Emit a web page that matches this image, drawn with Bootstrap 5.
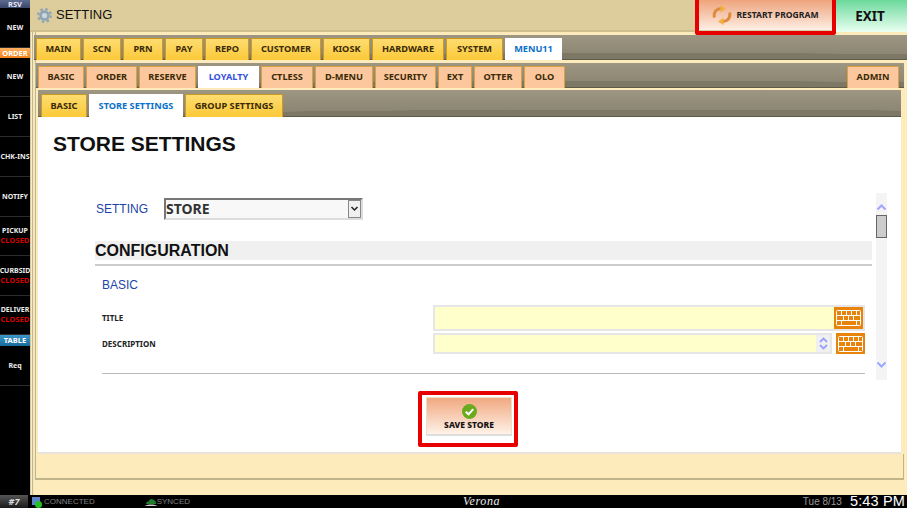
<!DOCTYPE html>
<html lang="en"><head><meta charset="utf-8"><title>Setting</title>
<link href="https://cdn.jsdelivr.net/npm/bootstrap@5.3.0/dist/css/bootstrap.min.css" rel="stylesheet">
<style>
html,body{height:508px;overflow:hidden;background:#000;font-family:"Noto Sans","Liberation Sans",sans-serif}
.app-top{height:495px}
.side{width:30px;background:#000;flex:none;overflow:hidden}
.side-head{font-size:7.5px;font-weight:700;text-align:center;color:#fff}
.sh-rsv{height:8px;background:linear-gradient(#5f6c92,#39456a);color:#e8e8f0;line-height:8px}
.sh-ord{height:10px;background:linear-gradient(#ffb060,#f08018);line-height:10px}
.sh-tab{height:11px;background:linear-gradient(#3c96c8,#1a6a9c);line-height:11px}
.side-item{height:40px;border-bottom:1px solid #2c2c2c;display:flex;flex-direction:column;align-items:center;justify-content:center;font-size:7px;font-weight:700;line-height:10px;color:#eee;white-space:nowrap;overflow:hidden}
.si-short{height:39px}
.closed{color:#e00000;letter-spacing:.4px}
.main-col{min-width:0;background:linear-gradient(90deg,#d8c894 0,#d8c894 1px,#f4ecd0 1px,#f4ecd0 2px,#c8b680 2px,#c8b680 3px,#f2e8c8 3px,#f2e8c8 5px,#c0b488 5px,#c0b488 6px,#fdebbb 6px)}
.topbar{height:32px;background:#ddcd9c;border-bottom:2px solid #cfbf8e;flex:none}
.gear{margin:8px 4px 0 7px}
.page-title{font-size:13px;color:#111;font-family:"Liberation Sans",sans-serif;line-height:30px}
.restart-box{margin-left:auto;width:141px;height:35px;border:4px solid #e60000;border-top:0;border-radius:0 0 3px 3px;position:relative;z-index:2;background:#fff}
.restart-btn{width:100%;height:31px;background:linear-gradient(#eea47c,#fdeee4);border:0;border-bottom:1px solid #d8cfa8;padding:0;font-size:8.6px;font-weight:700;color:#222;line-height:31px;display:flex;align-items:center;justify-content:center;gap:4px}
.exit-btn{width:71px;height:32px;background:linear-gradient(#6bd99b,#eafff2);border:0;padding:0 3px 0 0;font-size:13.5px;font-weight:700;color:#111}
.panel{margin:0 0 0 4px;flex:1;min-height:0;display:flex;flex-direction:column}
.tabbar{background:radial-gradient(ellipse 70% 40% at 70% 115%,#7d7866 0 98%,transparent 100%),linear-gradient(#9c9683,#88826f);border-bottom:1px solid #5e5a4a;display:flex;align-items:flex-end;gap:2px;flex:none}
.bar1{margin-top:3px;padding-left:2px;height:25px}
.bar2{margin:3px 3px 0 2px;padding-left:2px;padding-right:5px;height:25px}
.bar3{margin:2px 6px 0 4px;padding-left:3px;height:27px}
.tabx{height:22px;margin-bottom:-1px;display:flex;align-items:center;justify-content:center;font-size:9.2px;font-weight:700;color:#3a2a08;white-space:nowrap;border:1px solid #cc9a22;border-bottom:0;padding:0 0 1px;text-decoration:none}
.bar3 .tabx{height:23px}
.ty{background:linear-gradient(#fddc70,#fcc938)}
.to{background:#fcc79c;border-color:#d8a040}
.tw{background:#fff;color:#0a70c8;border-color:#fff}
.bar2 .tw{color:#3450e0}
.t34{width:34px}.t38{width:38px}.t40{width:40px}.t41{width:41px}.t44{width:44px}.t45{width:45px}.t46{width:46px}.t47{width:47px}.t48{width:48px}.t51{width:51px}.t52{width:52px}.t57{width:57px}.t58{width:58px}.t61{width:61px}.t70{width:70px}.t72{width:72px}.t94{width:94px}.t98{width:98px}
.sheet{margin:0 6px 0 4px;background:#fff;flex:none;height:337px;border-bottom:2px solid #e8e4dc;padding-left:15px;display:flex;flex-direction:column}
.sheet-h{font-size:21px;font-weight:700;line-height:26px;margin:14px 0 0;color:#111;font-family:"Liberation Sans",sans-serif}
.work{height:187px;margin-top:36px;margin-left:42px;position:relative}
.work-body{width:777px}
.lab-blue{color:#2244a8;font-family:"Liberation Sans",sans-serif;font-size:12px}
.sel-lab{width:69px;padding-left:1px;flex:none}
.sel-row{height:22px;margin-top:5px}
.sel-box{appearance:none;-webkit-appearance:none;width:199px;height:22px;font-size:14px;line-height:16px;font-weight:700;color:#333;border:2px solid;border-color:#777 #ddd #ddd #777;padding:0 0 1px 0;border-radius:0;font-family:"Noto Sans",sans-serif;background:#f8f8f8 url("data:image/svg+xml,%3Csvg xmlns='http://www.w3.org/2000/svg' width='13' height='18'%3E%3Crect x='.5' y='.5' width='12' height='17' fill='%23f0f0f0' stroke='%23888'/%3E%3Cpath d='M3.500 7L6.500 10L9.500 7' fill='none' stroke='%23222' stroke-width='1.500'/%3E%3C/svg%3E") no-repeat right 0 center}
.band{height:19px;margin-top:21px;background:#f0f0f0;font-size:16px;font-weight:700;line-height:19px;color:#111;font-family:"Liberation Sans",sans-serif}
.rule-a{height:2px;margin:4px 0 0;background:#ccc}
.blockx{margin-left:7px;margin-right:7px}
.sec-t{margin-top:12px;line-height:14px}
.f-row{height:26px;margin-top:13px}
.f-row2{height:21px;margin-top:2px}
.f-lab{width:331px;flex:none;font-size:8px;font-weight:700;color:#222;white-space:nowrap}
.f-in{flex:1;display:flex;align-items:center;border:2px solid #e6e6e6;background:#ffc;height:100%}
.f-in input,.f-in textarea{flex:1;min-width:0;height:100%;background:#ffc;border:0;outline:0;padding:0;resize:none;overflow:hidden}
.f-in2{width:399px;flex:none}
.strip{width:14px;height:100%;background:#f0f0f0;display:flex;flex-direction:column;align-items:center;justify-content:center;gap:1px;flex:none}
.kb{width:29px;height:22px;background:#e8830c;flex:none;display:flex;align-items:center;justify-content:center}
.kb2{height:21px;margin-left:4px}
.rule-b{height:1px;background:#bbb;margin-top:19px}
.vbar{position:absolute;top:0;left:781px;width:11px;height:187px;background:#f4f4f4;display:flex;flex-direction:column;align-items:center}
.ch-up{margin-top:10px;flex:none}
.ch-dn{margin-top:123px;flex:none}
.vthumb{width:11px;height:23px;background:#ccc;border:1px solid #666;margin-top:4px;flex:none}
.save-wrap{margin-top:11px;margin-right:18px}
.save-box{width:100px;height:56px;border:4px solid #e60000;border-radius:2px;padding:2px 1px 0 4px;background:#fff}
.save-btn{width:86px;height:39px;border:1px solid #eadfc8;border-bottom:2px solid #ddd;background:linear-gradient(#f0a880,#fff2e8);padding:6px 0 0;font-size:8.5px;font-weight:800;color:#111;display:flex;flex-direction:column;align-items:center;line-height:10px;gap:1px}
.panel-foot{height:26px;border:solid #c0b488;border-width:0 1px 2px 1px;flex:none;margin:0 3px 0 1px}
.panel-tail{flex:1;background:#fdebbb}
.bottom{height:13px;background:#000;overflow:hidden;font-size:8px;line-height:13px;color:#8a8a8a}
.seat{width:28px;background:linear-gradient(#555,#1a1a1a);color:#ddd;font-weight:700;font-style:italic;text-align:center;flex:none;font-size:9px}
.st{font-family:"Liberation Sans",sans-serif;color:#808080;font-size:8px}
.conn{margin-left:3px}
.conn-t{margin-left:2px}
.cloud{margin-left:50px}
.verona{position:absolute;left:463px;top:0;color:#eee;font:italic 12px/13px "Liberation Serif",serif;letter-spacing:.6px}
.dt{font-size:10px;font-family:"Liberation Sans",sans-serif;color:#999;margin-left:auto}
.clock{font-size:14.5px;line-height:13px;height:13px;color:#fff;font-family:"Liberation Sans",sans-serif;margin:0 2px 0 8px;letter-spacing:.15px}
</style></head>
<body>
<svg width="0" height="0" class="position-absolute"><defs><g id="kbd" fill="none" stroke="#fff"><rect x=".5" y=".5" width="24" height="15" rx="1"/><path d="M0 5.500H25M0 10.500H25M5.500 0V5M10.500 0V5M15.500 0V5M20.500 0V5M7.500 6V10M12.500 6V10M17.500 6V10M5.500 11V15M20.500 11V15"/></g></defs></svg>
<div class="d-flex app-top">
  <nav class="side d-flex flex-column">
    <div class="side-head sh-rsv">RSV</div>
    <div class="side-item">NEW</div>
    <div class="side-head sh-ord">ORDER</div>
    <div class="side-item si-short">NEW</div>
    <div class="side-item">LIST</div>
    <div class="side-item">CHK-INS</div>
    <div class="side-item">NOTIFY</div>
    <div class="side-item si-short"><span>PICKUP</span><span class="closed">CLOSED</span></div>
    <div class="side-item"><span>CURBSID</span><span class="closed">CLOSED</span></div>
    <div class="side-item si-short"><span>DELIVER</span><span class="closed">CLOSED</span></div>
    <div class="side-head sh-tab">TABLE</div>
    <div class="side-item">Req</div>
  </nav>
  <div class="main-col flex-grow-1 d-flex flex-column">
    <header class="topbar d-flex align-items-start">
      <svg class="gear" width="15" height="15" viewBox="0 0 16 16"><circle cx="8" cy="8" r="5.600" fill="#8fa5b5"/><circle cx="8" cy="8" r="6.800" fill="none" stroke="#8fa5b5" stroke-width="2.400" stroke-dasharray="2.700 2.640"/><circle cx="8" cy="8" r="2.800" fill="#cdd6da"/></svg>
      <span class="page-title">SETTING</span>
      <div class="restart-box"><button class="restart-btn" type="button"><svg width="20" height="20" viewBox="0 0 20 20" fill="none" stroke="#e08a3c" stroke-width="3"><path d="M2.500 12.500C1 7 5 3 10 3.500"/><path d="M8.500 0L14 3.500L8.500 7.500z" fill="#f2b040" stroke="none"/><path d="M17.500 7.500C19 13 15 17 10 16.500"/><path d="M11.500 12.500L6 16.500L11.500 20z" fill="#f2b040" stroke="none"/></svg>RESTART PROGRAM</button></div>
      <button class="exit-btn" type="button">EXIT</button>
    </header>
    <main class="panel">
      <div class="tabbar bar1">
        <a class="tabx ty t45">MAIN</a><a class="tabx ty t38">SCN</a><a class="tabx ty t40">PRN</a><a class="tabx ty t38">PAY</a><a class="tabx ty t44">REPO</a><a class="tabx ty t70">CUSTOMER</a><a class="tabx ty t47">KIOSK</a><a class="tabx ty t72">HARDWARE</a><a class="tabx ty t57">SYSTEM</a><a class="tabx tw t57">MENU11</a>
      </div>
      <div class="tabbar bar2">
        <a class="tabx to t46">BASIC</a><a class="tabx to t51">ORDER</a><a class="tabx to t57">RESERVE</a><a class="tabx tw t61">LOYALTY</a><a class="tabx to t52">CTLESS</a><a class="tabx to t58">D-MENU</a><a class="tabx to t61">SECURITY</a><a class="tabx to t34">EXT</a><a class="tabx to t48">OTTER</a><a class="tabx to t41">OLO</a><a class="tabx to t52 ms-auto">ADMIN</a>
      </div>
      <div class="tabbar bar3">
        <a class="tabx ty t46">BASIC</a><a class="tabx tw t94">STORE SETTINGS</a><a class="tabx ty t98">GROUP SETTINGS</a>
      </div>
      <section class="sheet">
        <h1 class="sheet-h">STORE SETTINGS</h1>
        <div class="work">
          <div class="work-body">
            <div class="d-flex align-items-center sel-row">
              <span class="lab-blue sel-lab">SETTING</span>
              <select class="sel-box" aria-label="Setting"><option>STORE</option></select>
            </div>
            <div class="band">CONFIGURATION</div>
            <div class="rule-a"></div>
            <div class="blockx">
              <div class="lab-blue sec-t">BASIC</div>
              <div class="d-flex align-items-center f-row">
                <span class="f-lab">TITLE</span>
                <div class="f-in"><input type="text" aria-label="Title"><span class="kb"><svg width="25" height="16" viewBox="0 0 25 16"><use href="#kbd"/></svg></span></div>
              </div>
              <div class="d-flex align-items-center f-row2">
                <span class="f-lab">DESCRIPTION</span>
                <div class="f-in f-in2"><textarea aria-label="Description"></textarea><span class="strip"><svg width="9" height="6" viewBox="0 0 9 6" fill="none" stroke="#9aa0ff" stroke-width="1.800"><path d="M1 5L4.500 1.500L8 5"/></svg><svg width="9" height="6" viewBox="0 0 9 6" fill="none" stroke="#9aa0ff" stroke-width="1.800"><path d="M1 1L4.500 4.500L8 1"/></svg></span></div>
                <span class="kb kb2"><svg width="25" height="16" viewBox="0 0 25 16"><use href="#kbd"/></svg></span>
              </div>
              <div class="rule-b"></div>
            </div>
          </div>
          <div class="vbar"><svg class="ch-up" width="11" height="8" viewBox="0 0 11 8" fill="none" stroke="#a0a6ff" stroke-width="2"><path d="M1.500 6.500L5.500 2.500L9.500 6.500"/></svg><div class="vthumb"></div><svg class="ch-dn" width="11" height="8" viewBox="0 0 11 8" fill="none" stroke="#a0a6ff" stroke-width="2"><path d="M1.500 1.500L5.500 5.500L9.500 1.500"/></svg></div>
        </div>
        <div class="save-wrap d-flex justify-content-center">
          <div class="save-box"><button class="save-btn" type="button"><svg width="15" height="15" viewBox="0 0 16 16"><circle cx="8" cy="8" r="8" fill="#6aaa1e"/><path d="M4 8.200L7 11L12 5.500" fill="none" stroke="#fff" stroke-width="2.200"/></svg>SAVE STORE</button></div>
        </div>
      </section>
      <div class="panel-foot"></div>
      <div class="panel-tail"></div>
    </main>
  </div>
</div>
<footer class="bottom d-flex align-items-center position-relative">
  <div class="seat">#7</div>
  <svg class="conn" width="11" height="12" viewBox="0 0 11 12"><rect x="1" y="1" width="8" height="8" fill="#5a86c8"/><circle cx="7.500" cy="8.500" r="3.500" fill="#22c022"/></svg>
  <span class="st conn-t">CONNECTED</span>
  <svg class="cloud" width="12" height="8" viewBox="0 0 12 8"><path d="M1 6C1 4 2.500 3.500 3.500 3.500C4 1.500 6 .5 8 1.500C10 2 11.500 4 11 6z" fill="#1f7a2a"/><path d="M0 8C1 6 11 6 12 8z" fill="#c8c8c8"/></svg>
  <span class="st">SYNCED</span>
  <span class="verona">Verona</span>
  <span class="dt">Tue 8/13</span>
  <span class="clock">5:43 PM</span>
</footer>
<script src="https://cdn.jsdelivr.net/npm/bootstrap@5.3.0/dist/js/bootstrap.bundle.min.js"></script>
</body></html>
